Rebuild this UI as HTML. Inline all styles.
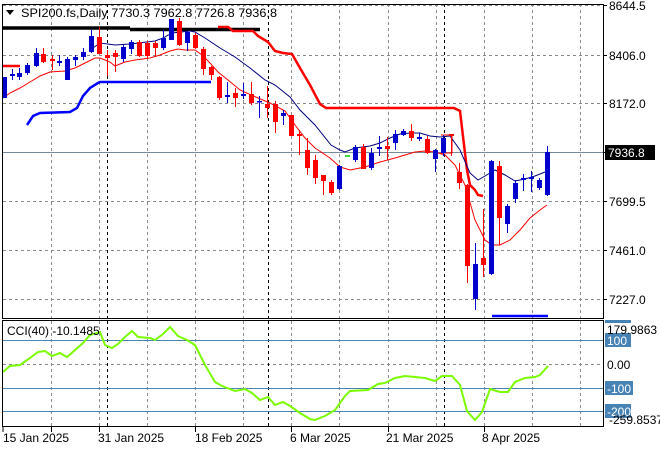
<!DOCTYPE html>
<html><head><meta charset="utf-8"><style>
html,body{margin:0;padding:0;background:#fff;}
svg{display:block;font-family:"Liberation Sans",sans-serif;}
</style></head><body>
<svg width="660" height="450" viewBox="0 0 660 450" xmlns="http://www.w3.org/2000/svg">
<rect width="660" height="450" fill="#fff"/>
<g stroke="#8a8a8a" stroke-width="1" stroke-dasharray="3,3" fill="none">
<path d="M51.5 4V318M99.5 4V318M147.5 4V318M195.5 4V318M243.5 4V318M291.5 4V318M339.5 4V318M388.5 4V318M436.5 4V318M484.5 4V318M532.5 4V318M580.5 4V318"/>
<path d="M51.5 321V426M99.5 321V426M147.5 321V426M195.5 321V426M243.5 321V426M291.5 321V426M339.5 321V426M388.5 321V426M436.5 321V426M484.5 321V426M532.5 321V426M580.5 321V426"/>
<path d="M3 5.5H603M3 55.5H603M3 103.5H603M3 201.5H603M3 250.5H603M3 299.5H603M3 364.5H603"/>
</g>
<g stroke="#000" stroke-width="1" stroke-dasharray="3,3" fill="none">
<path d="M107.5 4V318M268.5 4V318M444.5 4V318M107.5 321V426M268.5 321V426M444.5 321V426"/>
</g>
<path d="M3 152.5H603" stroke="#778899" stroke-width="1"/>
<path d="M3 340.5H603M3 388.5H603M3 411.5H603" stroke="#4682b4" stroke-width="1"/>
<!-- thick lines -->
<path d="M3 28H130M130 29.5H260" stroke="#000" stroke-width="3.5" fill="none"/>
<path d="M3 66H20" stroke="#f00" stroke-width="2.5"/>
<path d="M218 27H228L233 31H253L258 36L268 42L275 51L283 53L292 54L300 68L310 85L320 104L326 108L454 108L460 111L467 170L470 185L475 190L478 195L483 196" stroke="#f00" stroke-width="2.5" fill="none"/>
<path d="M27 125L33 116L40 113L70 112L77 108L83 96L90 88L98 83L100 82L211 82" stroke="#00f" stroke-width="2.5" fill="none"/>
<path d="M492 316H548" stroke="#00f" stroke-width="2.5"/>
<path d="M345 156H350" stroke="#0c0" stroke-width="1.5"/>
<path d="M441 135H452V153H440" stroke="#f00" stroke-width="1" fill="none"/>
<!-- MAs -->
<path d="M90 50L100 43L115 45L130 44L155 41L163 38L172 33L190 31L195 32L205 38L220 48L235 57L250 68L265 80L275 85L290 97L300 110L315 125L331 145L340 150L345 152L355 148L370 146L380 143L390 138L400 134L410 133L420 133L430 136L440 137L450 136L460 150L470 173L478 180L485 176L495 170L505 175L515 181L525 179L535 176L545 172" stroke="#000080" stroke-width="1" fill="none"/>
<path d="M3 98L10 93L20 88L30 82L40 76L50 72L65 71L75 68L85 63L95 58L100 58L110 62L115 66L125 62L135 60L150 58L160 55L170 51L178 49L185 50L195 50L202 55L210 63L218 72L228 80L240 90L258 98L270 103L285 111L295 125L305 138L315 148L330 158L340 167L350 170L365 167L380 162L395 158L405 155L415 152L425 151L435 152L445 155L455 165L465 185L475 220L485 240L492 245L500 245L510 240L520 230L530 218L540 210L547 205" stroke="#f00" stroke-width="1" fill="none"/>
<!-- candles -->
<g id="c"></g>
<g stroke-width="1">
<!-- x, color, bt, bb, wt, wb -->
<path stroke="#00c" d="M4.5 77V98M12.5 69V80M19.5 68V80M27.5 63V75M36.5 48V67M59.5 55V66M67.5 57V80M75.5 55V66M83.5 48V60M91.5 30V53M123.5 45V62M131.5 40V54M163.5 30V50M171.5 19V40M187.5 31V51M227.5 82V103M243.5 83V99M259.5 96V118M283.5 110V125M339.5 165V190M355.5 145V162M371.5 148V170M379.5 136V156M395.5 130V150M403.5 129V136M419.5 133V141M435.5 149V172M443.5 135V156M475.5 243V310M491.5 160V275M507.5 204V233M515.5 180V203M523.5 174V191M531.5 171V192M539.5 178V190M547.5 146V196"/>
<path stroke="#f00" d="M43.5 48V63M52.5 55V70M99.5 27V54M107.5 50V76M115.5 50V72M139.5 40V57M147.5 41V58M155.5 41V57M179.5 18V46M195.5 33V49M203.5 47V75M211.5 66V80M219.5 76V100M235.5 88V107M251.5 82V105M267.5 86V118M275.5 101V133M291.5 115V136M299.5 130V155M307.5 138V175M315.5 155V184M323.5 175V195M331.5 180V195M363.5 144V169M387.5 137V160M411.5 124V141M427.5 136V154M451.5 134V156M459.5 163V189M467.5 184V283M483.5 209V277M499.5 161V245"/>
</g>
<g fill="#00c">
<rect x="2" y="77" width="5" height="21"/><rect x="10" y="74" width="5" height="2"/><rect x="17" y="73" width="5" height="4"/><rect x="25" y="65" width="5" height="8"/><rect x="34" y="53" width="5" height="13"/><rect x="57" y="61" width="5" height="2"/><rect x="65" y="59" width="5" height="21"/><rect x="73" y="57" width="5" height="3"/><rect x="81" y="52" width="5" height="5"/><rect x="89" y="36" width="5" height="16"/><rect x="121" y="47" width="5" height="12"/><rect x="129" y="42" width="5" height="7"/><rect x="161" y="38" width="5" height="10"/><rect x="169" y="19" width="5" height="21"/><rect x="185" y="32" width="5" height="11"/><rect x="225" y="95" width="5" height="2"/><rect x="241" y="94" width="5" height="2"/><rect x="257" y="101" width="5" height="1.5"/><rect x="281" y="113" width="5" height="3"/><rect x="337" y="166" width="5" height="23"/><rect x="353" y="147" width="5" height="13"/><rect x="369" y="153" width="5" height="15"/><rect x="377" y="147" width="5" height="2"/><rect x="393" y="134" width="5" height="9"/><rect x="401" y="131" width="5" height="4"/><rect x="417" y="137" width="5" height="2"/><rect x="433" y="150" width="5" height="9"/><rect x="441" y="138" width="5" height="15"/><rect x="473" y="264" width="5" height="35"/><rect x="489" y="161" width="5" height="113"/><rect x="505" y="206" width="5" height="18"/><rect x="513" y="183" width="5" height="16"/><rect x="521" y="178" width="5" height="2"/><rect x="529" y="177" width="5" height="2"/><rect x="537" y="180" width="5" height="8"/><rect x="545" y="152" width="5" height="43"/>
</g>
<g fill="#f00">
<rect x="41" y="54" width="5" height="8"/><rect x="50" y="59" width="5" height="2"/><rect x="97" y="37" width="5" height="17"/><rect x="105" y="55" width="5" height="3"/><rect x="113" y="53" width="5" height="4"/><rect x="137" y="42" width="5" height="14"/><rect x="145" y="43" width="5" height="13"/><rect x="153" y="43" width="5" height="5"/><rect x="177" y="21" width="5" height="24"/><rect x="193" y="35" width="5" height="13"/><rect x="201" y="49" width="5" height="20"/><rect x="209" y="67" width="5" height="8"/><rect x="217" y="77" width="5" height="21"/><rect x="233" y="93" width="5" height="5"/><rect x="249" y="94" width="5" height="9"/><rect x="265" y="104" width="5" height="4"/><rect x="273" y="104" width="5" height="18"/><rect x="289" y="115" width="5" height="21"/><rect x="297" y="134" width="5" height="2"/><rect x="305" y="150" width="5" height="18"/><rect x="313" y="160" width="5" height="18"/><rect x="321" y="175" width="5" height="6"/><rect x="329" y="182" width="5" height="11"/><rect x="361" y="147" width="5" height="22"/><rect x="385" y="146" width="5" height="3"/><rect x="409" y="131" width="5" height="7"/><rect x="425" y="139" width="5" height="14"/><rect x="449" y="134" width="5" height="2"/><rect x="457" y="172" width="5" height="11"/><rect x="465" y="185" width="5" height="81"/><rect x="481" y="258" width="5" height="7"/><rect x="497" y="166" width="5" height="52"/>
</g>
<!-- CCI -->
<path d="M3 372L10 366L20 365L30 358L38 352L45 351L52 356L60 353L67 357L75 350L83 343L90 335L100 332L105 345L112 348L118 344L125 337L132 331L138 337L150 338L155 340L163 334L170 327L178 336L187 340L195 345L205 365L215 382L222 386L235 391L245 389L252 393L260 400L268 397L275 405L283 402L290 406L300 413L310 419L315 420L325 416L335 410L345 396L350 391L368 390L378 384L385 383L395 378L405 376L425 378L435 381L442 376L452 376L460 385L467 411L475 420L482 412L490 389L500 392L508 392L515 382L525 378L535 377L540 375L548 366" stroke="#7cfc00" stroke-width="2" fill="none"/>
<!-- frames -->
<rect x="2.5" y="4.5" width="601" height="314" fill="none" stroke="#000"/>
<rect x="2.5" y="320.5" width="601" height="106" fill="none" stroke="#000"/>
<path d="M603 5.5H607M603 55.5H607M603 103.5H607M603 152.5H607M603 201.5H607M603 250.5H607M603 299.5H607" stroke="#000"/>
<path d="M3 427V432M51.5 427V432M99.5 427V432M195.5 427V432M291.5 427V432M388.5 427V432M484.5 427V432" stroke="#000"/>
<!-- title -->
<path d="M6 10H14L10 15Z" fill="#000"/>
<text x="21" y="17" font-size="12" fill="#000" textLength="256" lengthAdjust="spacingAndGlyphs">SPI200.fs,Daily  7730.3 7962.8 7726.8 7936.8</text>
<!-- price labels -->
<g font-size="12" fill="#000">
<text x="609" y="10">8644.5</text>
<text x="609" y="60">8406.0</text>
<text x="609" y="108">8172.0</text>
<text x="609" y="206">7699.5</text>
<text x="609" y="255">7461.0</text>
<text x="609" y="304">7227.0</text>
</g>
<rect x="605" y="145" width="50" height="15" fill="#000"/>
<text x="608" y="157" font-size="12" fill="#fff">7936.8</text>
<!-- cci labels -->
<rect x="605" y="320" width="26" height="3" fill="#4682b4"/>
<rect x="605" y="333" width="26" height="14" fill="#4682b4"/>
<rect x="605" y="381" width="28" height="14" fill="#4682b4"/>
<rect x="605" y="404" width="26" height="14" fill="#4682b4"/>
<g font-size="12" fill="#000">
<text x="607" y="334">179.9863</text>
<text x="607" y="345" fill="#fff">100</text>
<text x="607" y="369">0.00</text>
<text x="607" y="393" fill="#fff">-100</text>
<text x="607" y="416" fill="#fff">-200</text>
<text x="609" y="424">-259.8537</text>
<text x="7" y="335">CCI(40) -10.1485</text>
</g>
<g font-size="12" fill="#000">
<text x="3" y="442">15 Jan 2025</text>
<text x="98" y="442">31 Jan 2025</text>
<text x="195" y="442">18 Feb 2025</text>
<text x="290" y="442">6 Mar 2025</text>
<text x="386" y="442">21 Mar 2025</text>
<text x="482" y="442">8 Apr 2025</text>
</g>
</svg>
</body></html>
